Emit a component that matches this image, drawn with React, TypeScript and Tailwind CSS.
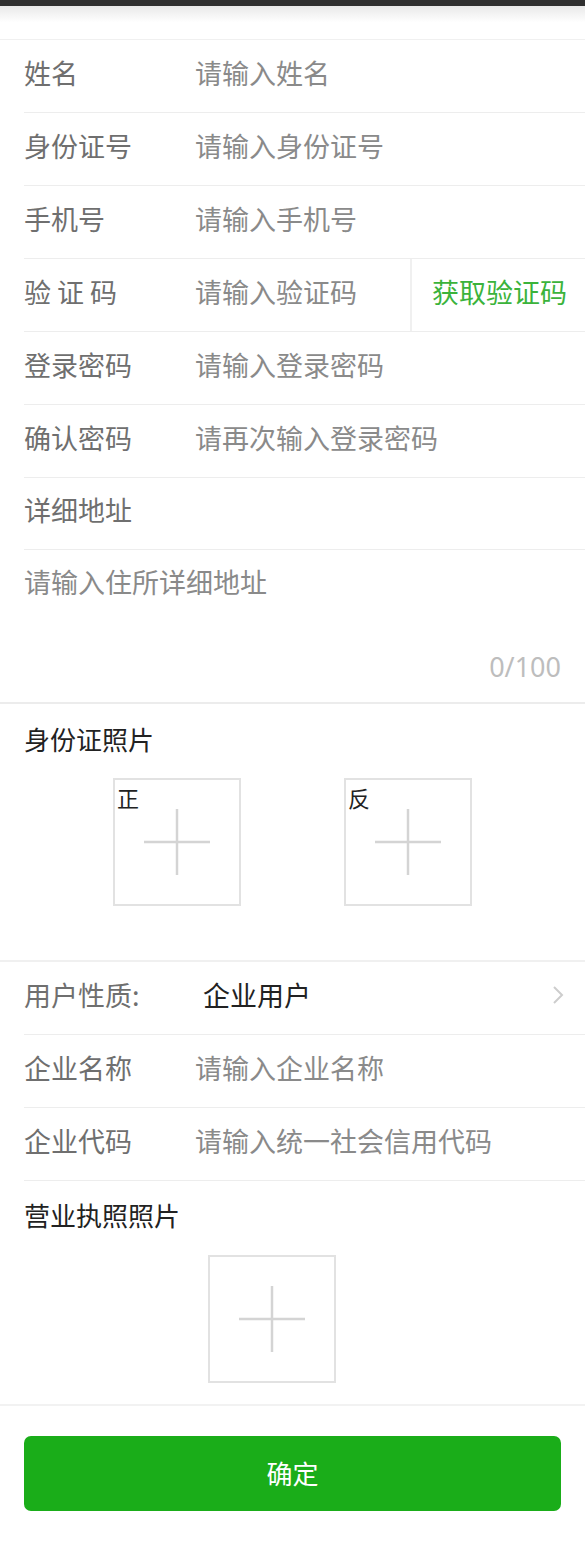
const font = { fontFamily: '"Noto Sans CJK SC", "Noto Sans", sans-serif' };

function Row({ label, placeholder }: { label: string; placeholder: string }) {
  return (
    <div className="ml-6 h-[73px] pb-[6px] flex items-center border-b border-[#ededed]">
      <span className="w-[171px] shrink-0 text-[#6f6f6f]">{label}</span>
      <span className="text-[#8a8a8a]">{placeholder}</span>
    </div>
  );
}

function PhotoBox({ tag }: { tag?: string }) {
  return (
    <div className="relative w-[128px] h-[128px] border-2 border-[#e2e2e2] flex items-center justify-center">
      {tag && <span className="absolute left-[2px] top-[6px] text-[22px] leading-none text-[#222]">{tag}</span>}
      <svg width="66" height="66" viewBox="0 0 66 66">
        <line x1="0" y1="33" x2="66" y2="33" stroke="#d4d4d4" strokeWidth="2.5" />
        <line x1="33" y1="0" x2="33" y2="66" stroke="#d4d4d4" strokeWidth="2.5" />
      </svg>
    </div>
  );
}

export default function App() {
  return (
    <div className="w-[585px] min-h-[1560px] bg-white text-[27px]" style={font}>
      {/* status / top bar */}
      <div className="h-[6px] bg-[#2f2f2f]" />
      <div className="h-[34px] bg-gradient-to-b from-[#e9e9e9] via-white to-white border-b border-[#f0f0f0]" />

      <Row label="姓名" placeholder="请输入姓名" />
      <Row label="身份证号" placeholder="请输入身份证号" />
      <Row label="手机号" placeholder="请输入手机号" />
      <div className="ml-6 h-[73px] flex items-center border-b border-[#ededed]">
        <span className="w-[171px] shrink-0 pb-[6px] text-[#6f6f6f]">验 证 码</span>
        <span className="flex-1 pb-[6px] text-[#8a8a8a]">请输入验证码</span>
        <div className="h-full w-[175px] border-l-2 border-[#f0f0f0] flex items-center pl-[20px] pb-[6px] text-[#3bb33b]">
          获取验证码
        </div>
      </div>
      <Row label="登录密码" placeholder="请输入登录密码" />
      <Row label="确认密码" placeholder="请再次输入登录密码" />
      <div className="ml-6 h-[72px] pb-[6px] flex items-center border-b border-[#ededed] text-[#6f6f6f]">详细地址</div>

      {/* address textarea */}
      <div className="h-[154px] pl-6 pr-6 pt-[13px] flex flex-col border-b-2 border-[#ececec]">
        <span className="text-[#8a8a8a] leading-[38px]">请输入住所详细地址</span>
        <span className="mt-auto mb-[22px] self-end text-[#bdbdbd] leading-none" style={{ fontFamily: '"Noto Sans", sans-serif' }}>
          0/100
        </span>
      </div>

      {/* id photos */}
      <div className="h-[258px] pl-6 pt-[19px] border-b-2 border-[#f0f0f0]">
        <div className="text-[26px] text-[#222] leading-[32px]">身份证照片</div>
        <div className="flex gap-[103px] pl-[89px] mt-[23px]">
          <PhotoBox tag="正" />
          <PhotoBox tag="反" />
        </div>
      </div>

      {/* user type */}
      <div className="ml-6 h-[73px] pb-[6px] flex items-center border-b border-[#ededed]">
        <span className="w-[179px] shrink-0 text-[#6f6f6f]">用户性质:</span>
        <span className="flex-1 text-[#222]">企业用户</span>
        <svg width="14" height="22" viewBox="0 0 14 22" className="mr-[20px]">
          <path d="M3 3 L11 11 L3 19" fill="none" stroke="#cdcdcd" strokeWidth="2" />
        </svg>
      </div>
      <Row label="企业名称" placeholder="请输入企业名称" />
      <Row label="企业代码" placeholder="请输入统一社会信用代码" />

      {/* license photo */}
      <div className="h-[225px] pl-6 pt-[18px] border-b-2 border-[#f2f2f2]">
        <div className="text-[26px] text-[#222] leading-[32px]">营业执照照片</div>
        <div className="flex pl-[184px] mt-[24px]">
          <PhotoBox />
        </div>
      </div>

      <div className="px-6 pt-[30px]">
        <button className="w-full h-[75px] rounded-[7px] bg-[#1aad19] text-white text-[26px] pb-[2px]">确定</button>
      </div>
    </div>
  );
}
